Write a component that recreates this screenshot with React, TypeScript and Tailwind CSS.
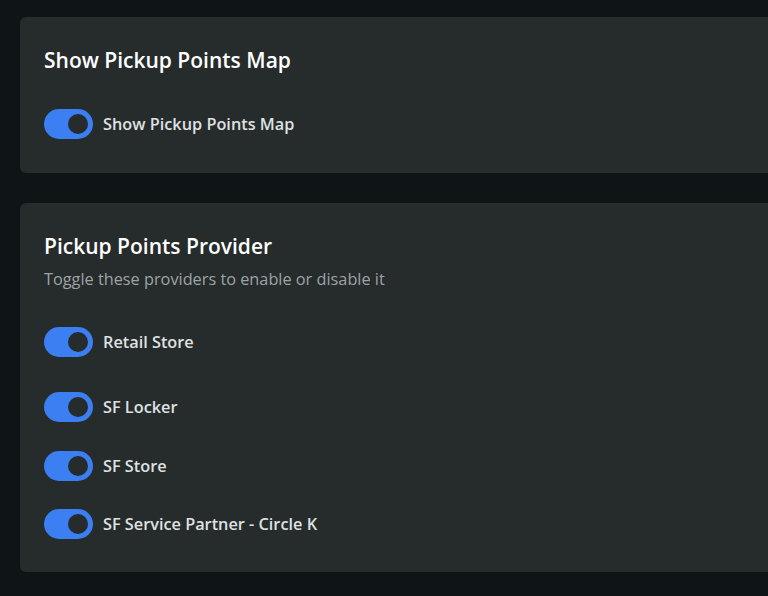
const providers = [
  { label: "Retail Store", gap: "mt-0" },
  { label: "SF Locker", gap: "mt-[35px]" },
  { label: "SF Store", gap: "mt-[29px]" },
  { label: "SF Service Partner - Circle K", gap: "mt-[28px]" },
];

function Toggle() {
  return (
    <div className="flex h-[30px] w-[49px] shrink-0 items-center justify-end rounded-full bg-[#3b7ff2] px-[5px]">
      <div className="h-[20px] w-[20px] rounded-full bg-[#262b2c]" />
    </div>
  );
}

function ToggleRow({ label }: { label: string }) {
  return (
    <div className="flex items-center gap-[10px]">
      <Toggle />
      <span className="text-[16.3px] font-semibold text-[#dfe1e2]">{label}</span>
    </div>
  );
}

export default function App() {
  return (
    <div
      className="min-h-[596px] overflow-hidden bg-[#0f1417] pl-5 pt-[17px] pb-6"
      style={{ fontFamily: '"Open Sans", "Noto Sans", sans-serif' }}
    >
      {/* Map card */}
      <section className="w-[780px] rounded-md bg-[#262b2c] px-6 pt-[30px] pb-[34px]">
        <h2 className="text-[21px] font-semibold leading-[26px] text-white">Show Pickup Points Map</h2>
        <div className="mt-[36px]">
          <ToggleRow label="Show Pickup Points Map" />
        </div>
      </section>

      {/* Providers card */}
      <section className="mt-[30px] w-[780px] rounded-md bg-[#262b2c] px-6 pt-[30px] pb-[33px]">
        <h2 className="text-[21px] font-semibold leading-[26px] text-white">Pickup Points Provider</h2>
        <p className="mt-[8px] text-[16.3px] text-[#9ea3a6]">Toggle these providers to enable or disable it</p>
        <div className="mt-[36px] flex flex-col">
          {providers.map((p) => (
            <div key={p.label} className={p.gap}>
              <ToggleRow label={p.label} />
            </div>
          ))}
        </div>
      </section>
    </div>
  );
}
